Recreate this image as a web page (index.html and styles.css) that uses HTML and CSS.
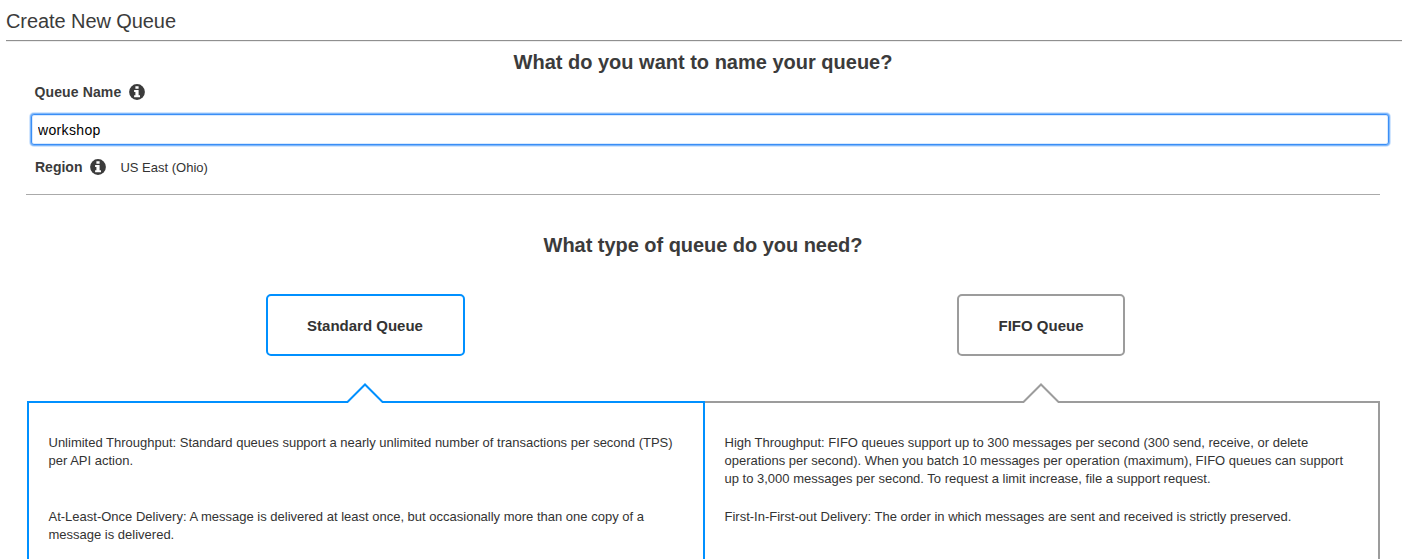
FILE: index.html
```html
<!DOCTYPE html>
<html lang="en">
<head>
<meta charset="utf-8">
<title>Create New Queue</title>
<link rel="stylesheet" href="styles.css">
</head>
<body>
<header class="page-header"><h1 class="page-title"><span>Create New Queue</span></h1></header>
<main class="content">
  <section class="naming">
    <h2 class="question question-name"><span>What do you want to name your queue?</span></h2>
    <div class="field-row name-row">
      <label class="label label-name" for="queue-name">Queue Name</label>
      <svg class="info" viewBox="0 0 16 16" aria-hidden="true"><circle cx="8" cy="8" r="7.9"/><path d="M6.400 2.300h3.200v2.500H6.400zM5.100 6.100h4.500v5.200h1.400v2H5.100v-2h1.300V8.100H5.100z"/></svg>
    </div>
    <input class="name-input" id="queue-name" type="text" value="workshop">
    <div class="field-row region-row">
      <span class="label label-region">Region</span>
      <svg class="info" viewBox="0 0 16 16" aria-hidden="true"><circle cx="8" cy="8" r="7.9"/><path d="M6.400 2.300h3.200v2.500H6.400zM5.100 6.100h4.500v5.200h1.400v2H5.100v-2h1.300V8.100H5.100z"/></svg>
      <span class="region-value">US East (Ohio)</span>
    </div>
  </section>
  <h2 class="question question-type"><span>What type of queue do you need?</span></h2>
  <div class="types">
    <section class="type type-standard">
      <button class="choice" type="button"><span>Standard Queue</span></button>
      <div class="details">
        <svg class="pointer" viewBox="0 0 38 20" aria-hidden="true"><path d="M1.500 18h35v2h-35z" class="pointer-fill"/><path d="M0 19h1.500L19 1.500 36.500 19H38"/></svg>
        <p class="detail"><span>Unlimited Throughput: Standard queues support a nearly unlimited number of transactions per second (TPS)</span><br><span>per API action.</span></p>
        <p class="detail"><span>At-Least-Once Delivery: A message is delivered at least once, but occasionally more than one copy of a</span><br><span>message is delivered.</span></p>
      </div>
    </section>
    <section class="type type-fifo">
      <button class="choice" type="button"><span>FIFO Queue</span></button>
      <div class="details">
        <svg class="pointer" viewBox="0 0 38 20" aria-hidden="true"><path d="M1.500 18h35v2h-35z" class="pointer-fill"/><path d="M0 19h1.500L19 1.500 36.500 19H38"/></svg>
        <p class="detail"><span>High Throughput: FIFO queues support up to 300 messages per second (300 send, receive, or delete</span><br><span>operations per second). When you batch 10 messages per operation (maximum), FIFO queues can support</span><br><span>up to 3,000 messages per second. To request a limit increase, file a support request.</span></p>
        <p class="detail"><span>First-In-First-out Delivery: The order in which messages are sent and received is strictly preserved.</span></p>
      </div>
    </section>
  </div>
</main>
</body>
</html>
```
FILE: styles.css
```css
* { box-sizing: border-box; }
body {
  margin: 0;
  height: 559px;
  overflow: hidden;
  background: #fff;
  color: #333;
  font: 13px/18px "Liberation Sans", Arial, sans-serif;
}
h1, h2, p { margin: 0; }
.page-header {
  height: 41px;
  margin: 0 5px 0 6px;
  border-bottom: 1px solid #909090;
  box-shadow: 0 1px #eee;
}
.page-title { color: #3b3b3b; font-size: 20px; font-weight: 400; line-height: 42px; letter-spacing: -.08px; white-space: nowrap; }
.content { padding: 0 27px 0 26px; }
.naming { height: 154px; border-bottom: 1px solid #aaa; }
.question { text-align: center; color: #3b3b3b; font-size: 20px; line-height: 42px; white-space: nowrap; }
.question-type { letter-spacing: -.04px; }
.field-row { display: flex; align-items: center; height: 18px; padding-left: 9px; }
.label { color: #3b3b3b; font-size: 14px; font-weight: 700; }
.label-name { margin-left: -.5px; letter-spacing: .12px; }
.info { width: 16px; height: 16px; margin: -1px 0 0 8px; fill: #3b3b3b; }
.info path { fill: #fff; }
.name-input {
  display: block;
  width: 1358px;
  height: 31px;
  margin: 13px 0 13px 5px;
  padding: 1px 7px 0 6px;
  border: 1px solid #3a8ef6;
  border-radius: 3px;
  outline: 0;
  box-shadow: 0 0 0 1px #80b8fa, 0 0 0 2px #d2e6fe, inset 0 0 0 1px #d9eafe;
  color: #000;
  font: 14px "Liberation Sans", Arial, sans-serif;
  letter-spacing: .35px;
}
.region-value { margin-left: 14px; padding-top: 1px; }
.question-type { padding-top: 29px; }
.types { display: grid; grid-template-columns: 678px 675px; margin: 28px 0 0 1px; }
.type { display: flex; flex-direction: column; align-items: center; --accent: #0090ff; }
.type-fifo { --accent: #9c9c9c; }
.choice {
  width: 199px;
  height: 62px;
  margin-right: 2px;
  padding: 0;
  border: 2px solid var(--accent);
  border-radius: 5px;
  background: #fff;
  color: #333;
  font: 700 15px "Liberation Sans", Arial, sans-serif;
}
.type-fifo .choice { width: 168px; margin-right: 3px; }
.details {
  position: relative;
  width: 100%;
  height: 180px;
  margin-top: 45px;
  padding: 31px 0 0 19.5px;
  border: 2px solid var(--accent);
  white-space: nowrap;
}
.type-fifo .details { border-left: 0; }
.detail { height: 74px; }
.pointer { position: absolute; top: -20px; left: 317px; width: 38px; height: 20px; fill: none; stroke: var(--accent); stroke-width: 2; }
.pointer .pointer-fill { fill: #fff; stroke: none; }
```
